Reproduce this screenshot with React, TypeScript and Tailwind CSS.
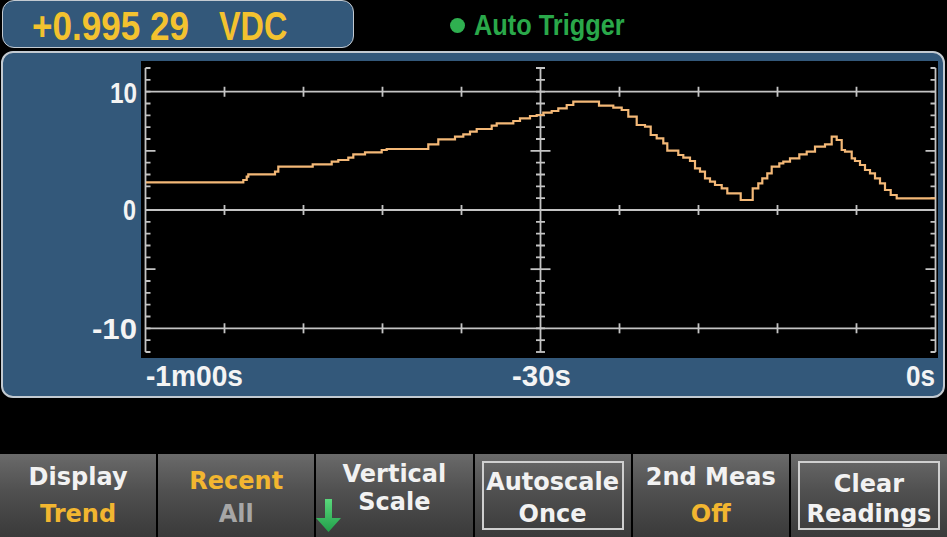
import React from "react";

const Y = (v: number) => 210 - 11.833 * v;

const steps: [number, number][] = [
  [146, 182.3], [243.3, 180], [246.7, 176.7], [248.3, 174.3], [275, 171.7], [278.3, 166.7],
  [312.7, 164.3], [331.7, 161.7], [338.3, 160], [348.3, 157.7], [353.3, 154.3], [365, 152.3],
  [381.7, 150], [386.7, 149], [428.3, 144.3], [438.3, 139.3], [455, 136.7], [463.3, 134.3],
  [470, 131.7], [476.7, 129], [491.7, 125.7], [496.7, 123.3], [513.3, 121], [520, 118.3],
  [530, 116], [536.7, 115], [543.3, 112.7], [551.7, 111], [558.3, 108.3], [566.7, 105],
  [573.3, 101.7], [599, 105.7], [613.3, 107.7], [621.7, 110], [628.3, 116.7], [636.7, 125],
  [645, 126.7], [650.7, 135], [656.7, 138.3], [663.3, 143.3], [667.3, 150.7], [678.3, 155],
  [683.3, 157.7], [690, 161], [695, 168.3], [700, 171.7], [705, 178.3], [710, 181.7],
  [715, 185], [721.7, 188.3], [727.3, 193.3], [740.7, 200], [752.7, 188.3], [758.3, 183.3],
  [762.3, 178.3], [767.3, 173.3], [771.7, 166.7], [779.3, 163.3], [783.3, 161.7], [790, 158.3],
  [799.3, 154.3], [806.7, 151.7], [815, 146.7], [825, 144.3], [831.7, 136.7], [836.7, 140],
  [841.7, 150], [845, 151.7], [851.7, 158.3], [855, 161], [860, 165], [865, 170], [870, 173.3],
  [875, 178.3], [880, 183.3], [885, 190], [890.7, 195], [896.7, 198.3],
];

const tracePath =
  `M${steps[0][0]},${steps[0][1]}` +
  steps.slice(1).map(([x, y]) => `H${x}V${y}`).join("") +
  "H935.5";

const LEFT = 145.5;
const RIGHT = 935.5;
const CENTER = 540.5;
const GRID = "#c4c4c4";

function Chart() {
  const vals: number[] = [];
  for (let v = -12; v <= 12; v++) vals.push(v);
  const xTicks: number[] = [];
  for (let k = 1; k <= 9; k++) if (k !== 5) xTicks.push(LEFT + 79 * k);
  const lines: React.ReactNode[] = [];
  vals.forEach((v) => {
    const y = Y(v);
    const long = Math.abs(v) === 5;
    const len = long ? 10 : 5;
    lines.push(<line key={`l${v}`} x1={LEFT} x2={LEFT + len} y1={y} y2={y} />);
    lines.push(<line key={`r${v}`} x1={RIGHT} x2={RIGHT - len} y1={y} y2={y} />);
    lines.push(<line key={`c${v}`} x1={CENTER - (long ? 10 : 4.5)} x2={CENTER + (long ? 10 : 4.5)} y1={y} y2={y} />);
  });
  [10, 0, -10].forEach((v) => {
    const y = Y(v);
    lines.push(<line key={`g${v}`} x1={LEFT} x2={RIGHT} y1={y} y2={y} />);
    xTicks.forEach((x) => lines.push(<line key={`t${v}-${x}`} x1={x} x2={x} y1={y - 5} y2={y + 5} />));
  });
  return (
    <svg width={940} height={343} viewBox="3 53 940 343" className="block">
      <rect x={141} y={61} width={797} height={297} fill="#000" />
      <g stroke={GRID} strokeWidth={1.8} fill="none">
        <line x1={LEFT} x2={LEFT} y1={Y(12)} y2={Y(-12)} />
        <line x1={RIGHT} x2={RIGHT} y1={Y(12)} y2={Y(-12)} />
        <line x1={CENTER} x2={CENTER} y1={Y(12)} y2={Y(-12)} />
        {lines}
      </g>
      <path d={tracePath} fill="none" stroke="#f3b877" strokeWidth={2.2} strokeLinejoin="miter" />
      <g fill="#f4f4f4" fontFamily="'Liberation Sans', Arial, sans-serif" fontWeight={700}>
        <text x={110} y={103} fontSize={29} textLength={27} lengthAdjust="spacingAndGlyphs">10</text>
        <text x={123} y={220} fontSize={29} textLength={13} lengthAdjust="spacingAndGlyphs">0</text>
        <text x={92} y={339} fontSize={29} textLength={45} lengthAdjust="spacingAndGlyphs">-10</text>
        <text x={146} y={386} fontSize={30} textLength={97} lengthAdjust="spacingAndGlyphs">-1m00s</text>
        <text x={512} y={386} fontSize={30} textLength={59} lengthAdjust="spacingAndGlyphs">-30s</text>
        <text x={906} y={386} fontSize={30} textLength={29} lengthAdjust="spacingAndGlyphs">0s</text>
      </g>
    </svg>
  );
}

const btnBase =
  "relative h-full bg-linear-to-b from-[#6a6a6a] via-[#505050] via-45% to-[#3a3a3a] flex flex-col items-center font-['DejaVu_Sans',sans-serif] font-bold text-[24px] leading-[28px] text-[#f2f2f2] whitespace-nowrap";

export default function App() {
  return (
    <div className="w-[947px] h-[537px] bg-black flex flex-col overflow-hidden font-['Liberation_Sans',Arial,sans-serif]">
      {/* header */}
      <div className="h-[48px] flex items-start shrink-0">
        <div className="ml-[2px] w-[352px] h-[48px] box-border rounded-[12px] border-[1.5px] border-[#c3cad1] bg-[#33587a] flex pl-[29px] pt-[3px]">
          <span className="w-[157px] whitespace-nowrap">
            <span className="inline-block origin-left scale-x-[0.877] text-[40px] leading-[44px] font-bold text-[#f3c22f]">
              +0.995 29
            </span>
          </span>
          <span className="ml-[30px] w-[68px] whitespace-nowrap">
            <span className="inline-block origin-left scale-x-[0.81] text-[40px] leading-[44px] font-bold text-[#f3c22f]">
              VDC
            </span>
          </span>
        </div>
        <div className="ml-[96px] h-[48px] pt-[3px] box-border flex items-center">
          <span className="w-[15px] h-[15px] rounded-full bg-[#2fb050]" />
          <span className="ml-[9px] w-[152px] whitespace-nowrap">
            <span className="inline-block origin-left scale-x-[0.874] text-[29px] leading-[32px] font-bold text-[#2aa84a]">
              Auto Trigger
            </span>
          </span>
        </div>
      </div>

      {/* main panel */}
      <div className="ml-[1px] mt-[3px] w-[944px] h-[347px] box-border rounded-[12px] border-2 border-[#c3cad1] bg-[#33587a] shrink-0 overflow-hidden">
        <Chart />
      </div>

      {/* softkeys */}
      <div className="mt-auto h-[83px] grid grid-cols-6 gap-[2px] shrink-0">
        <div className={`${btnBase} pt-[9px] gap-[9px]`}>
          <span>Display</span>
          <span className="text-[#f2b630]">Trend</span>
        </div>
        <div className={`${btnBase} pt-[13px] gap-[5px]`}>
          <span className="text-[#f2b630]">Recent</span>
          <span className="text-[#a6a6a6]">All</span>
        </div>
        <div className={`${btnBase} pt-[6px]`}>
          <span>Vertical</span>
          <span>Scale</span>
          <svg className="absolute left-0 bottom-[4px]" width="26" height="34" viewBox="0 0 26 34">
            <defs>
              <linearGradient id="ag" x1="0" y1="0" x2="0" y2="1">
                <stop offset="0" stopColor="#5ad87c" />
                <stop offset="1" stopColor="#22a04a" />
              </linearGradient>
            </defs>
            <path d="M9,0 H16 V19 H25 L12.5,33 L0,19 H9 Z" fill="url(#ag)" />
          </svg>
        </div>
        <div className={`${btnBase} p-[7px]`}>
          <div className="w-full h-full border-2 border-[#cfcfcf] flex flex-col items-center pt-[5px] gap-[4px]">
            <span>Autoscale</span>
            <span>Once</span>
          </div>
        </div>
        <div className={`${btnBase} pt-[9px] gap-[9px]`}>
          <span>2nd Meas</span>
          <span className="text-[#f2b630]">Off</span>
        </div>
        <div className={`${btnBase} p-[7px]`}>
          <div className="w-full h-full border-2 border-[#cfcfcf] flex flex-col items-center pt-[7px] gap-[2px]">
            <span>Clear</span>
            <span>Readings</span>
          </div>
        </div>
      </div>
    </div>
  );
}
